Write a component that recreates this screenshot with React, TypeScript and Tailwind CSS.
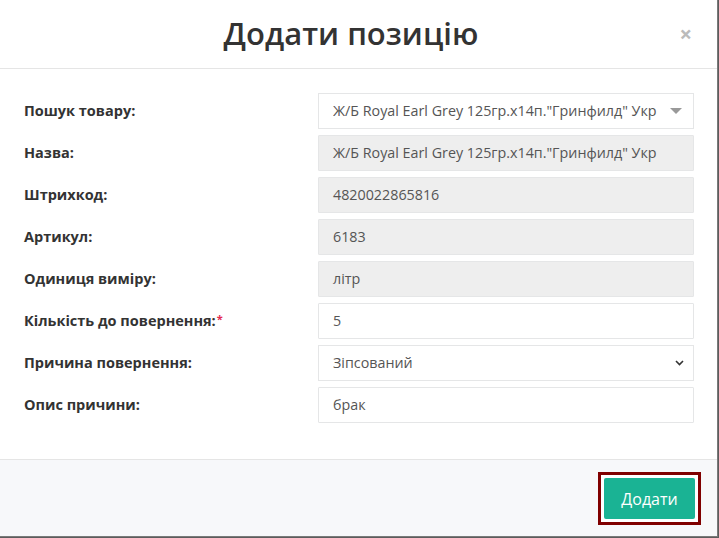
import React from "react";

const font = { fontFamily: '"Open Sans", "Noto Sans", sans-serif' };

function Row({
  label,
  required,
  children,
}: {
  label: string;
  required?: boolean;
  children: React.ReactNode;
}) {
  return (
    <div className="flex items-center h-[36px] mb-[6px]">
      <div className="w-[294px] text-[14.5px] font-bold text-[#333] leading-none whitespace-nowrap">
        {label}
        {required && (
          <sup className="text-[#e4284f] text-[11px] font-bold relative top-[-3px] ml-[1px]">*</sup>
        )}
      </div>
      <div className="w-[376px] h-[36px]">{children}</div>
    </div>
  );
}

function Field({ value, disabled }: { value: string; disabled?: boolean }) {
  return (
    <div
      className={`h-full w-full border border-[#e5e6e7] rounded-[1px] flex items-center pl-[14px] text-[14.3px] text-[#555] ${
        disabled ? "bg-[#eeeeee]" : "bg-white"
      }`}
    >
      {value}
    </div>
  );
}

export default function App() {
  return (
    <div className="w-[719px] h-[538px] bg-[#5c5c5c] overflow-hidden" style={font}>
      <div className="w-[718px] h-[537px] bg-white border-r border-b border-[#7a7a7a] flex flex-col">
        {/* header */}
        <div className="h-[69px] border-b border-[#e5e5e5] relative flex items-center justify-center pr-[15px] shrink-0">
          <h4 className="text-[31px] font-semibold text-[#333] leading-none mt-[-1px]">
            Додати позицію
          </h4>
          <span className="absolute right-[25px] top-[22px] text-[22px] font-bold text-[#bbbbbb] leading-none">
            ×
          </span>
        </div>
        {/* body */}
        <div className="flex-1 pl-[24px] pt-[24px]">
          <Row label="Пошук товару:">
            <div className="h-full w-full border border-[#e5e6e7] bg-white flex items-center pl-[14px] pr-[11px] text-[14.3px] text-[#555]">
              <span className="flex-1 whitespace-nowrap overflow-hidden">
                Ж/Б Royal Earl Grey 125гр.х14п."Гринфилд" Укр
              </span>
              <svg width="12" height="7" viewBox="0 0 12 7" className="ml-[6px]">
                <path d="M0 0 L12 0 L6 6 Z" fill="#999" />
              </svg>
            </div>
          </Row>
          <Row label="Назва:">
            <Field value={'Ж/Б Royal Earl Grey 125гр.х14п."Гринфилд" Укр'} disabled />
          </Row>
          <Row label="Штрихкод:">
            <Field value="4820022865816" disabled />
          </Row>
          <Row label="Артикул:">
            <Field value="6183" disabled />
          </Row>
          <Row label="Одиниця виміру:">
            <Field value="літр" disabled />
          </Row>
          <Row label="Кількість до повернення:" required>
            <Field value="5" />
          </Row>
          <Row label="Причина повернення:">
            <div className="h-full w-full border border-[#e5e6e7] bg-white flex items-center pl-[14px] pr-[9px] text-[14.3px] text-[#555]">
              <span className="flex-1">Зіпсований</span>
              <svg width="9" height="6" viewBox="0 0 9 6">
                <path d="M1 1 L4.5 4.5 L8 1" stroke="#333" strokeWidth="1.6" fill="none" />
              </svg>
            </div>
          </Row>
          <Row label="Опис причини:">
            <Field value="брак" />
          </Row>
        </div>
        {/* footer */}
        <div className="h-[77px] border-t border-[#e5e5e5] bg-[#f7f8fa] flex items-center justify-end pr-[16px] shrink-0">
          <div className="border-[3px] border-[#800000] bg-white p-[3px] mt-[1px]">
            <button className="block w-[91px] h-[41px] bg-[#1ab394] text-white text-[16px] rounded-[2px]">
              Додати
            </button>
          </div>
        </div>
      </div>
    </div>
  );
}
